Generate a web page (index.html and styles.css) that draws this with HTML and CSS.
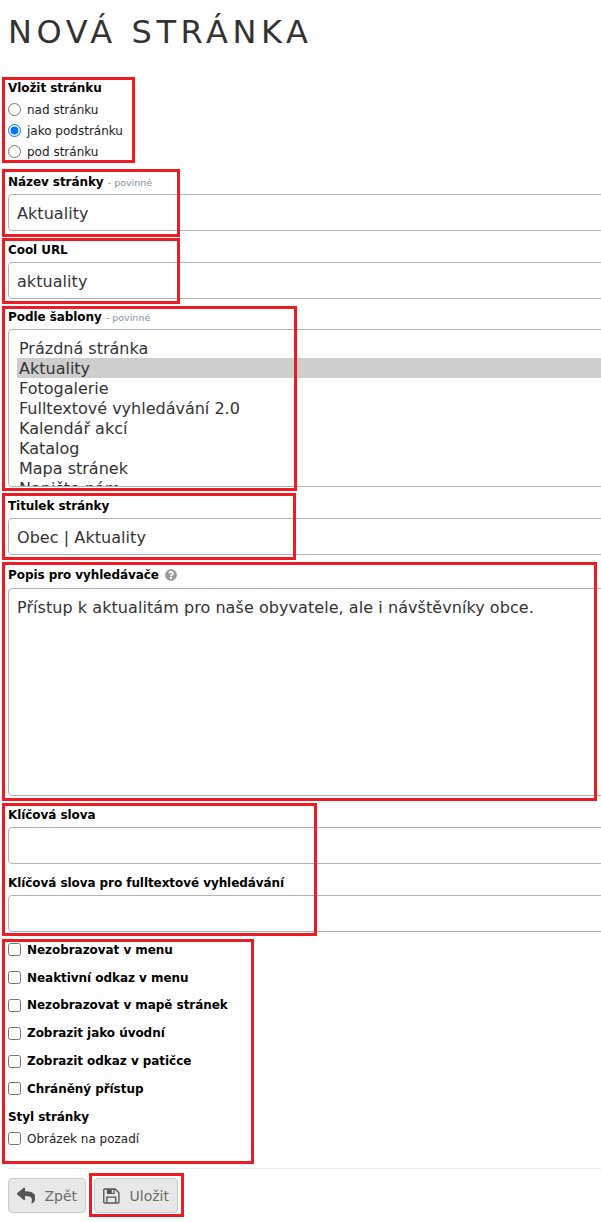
FILE: index.html
```html
<!DOCTYPE html>
<html lang="cs">
<head>
<meta charset="utf-8">
<title>Nová stránka</title>
<link rel="stylesheet" href="styles.css">
</head>
<body>
<main class="page">
  <h1 class="title">NOVÁ STRÁNKA</h1>
  <form class="form">
    <fieldset class="group group-radios">
      <div class="label">Vložit stránku</div>
      <label class="radio"><input type="radio" name="pos"><span>nad stránku</span></label>
      <label class="radio"><input type="radio" name="pos" checked><span>jako podstránku</span></label>
      <label class="radio"><input type="radio" name="pos"><span>pod stránku</span></label>
    </fieldset>
    <div class="field">
      <label class="label">Název stránky <small class="req">- povinné</small></label>
      <input class="control" type="text" value="Aktuality">
    </div>
    <div class="field">
      <label class="label">Cool URL</label>
      <input class="control" type="text" value="aktuality">
    </div>
    <div class="field field-select">
      <label class="label">Podle šablony <small class="req">- povinné</small></label>
      <select class="control listbox" size="8">
        <option>Prázdná stránka</option>
        <option selected>Aktuality</option>
        <option>Fotogalerie</option>
        <option>Fulltextové vyhledávání 2.0</option>
        <option>Kalendář akcí</option>
        <option>Katalog</option>
        <option>Mapa stránek</option>
        <option>Napište nám</option>
      </select>
    </div>
    <div class="field">
      <label class="label">Titulek stránky</label>
      <input class="control" type="text" value="Obec | Aktuality">
    </div>
    <div class="field field-help">
      <label class="label">Popis pro vyhledávače
        <svg class="help" viewBox="0 0 512 512" aria-hidden="true"><path d="M504 256c0 136.997-111.043 248-248 248S8 392.997 8 256C8 119.083 119.043 8 256 8s248 111.083 248 248zM262.655 90c-54.497 0-89.255 22.957-116.549 63.758-3.536 5.286-2.353 12.415 2.715 16.258l34.699 26.31c5.205 3.947 12.621 3.008 16.665-2.122 17.864-22.658 30.113-35.797 57.303-35.797 20.429 0 45.698 13.148 45.698 32.958 0 14.976-12.363 22.667-32.534 33.976C247.128 238.528 216 254.941 216 296v4c0 6.627 5.373 12 12 12h56c6.627 0 12-5.373 12-12v-1.333c0-28.462 83.186-29.647 83.186-106.667 0-58.002-60.165-102-116.531-102zM256 338c-25.365 0-46 20.635-46 46 0 25.364 20.635 46 46 46s46-20.636 46-46c0-25.365-20.635-46-46-46z"/></svg>
      </label>
      <textarea class="control area">Přístup k aktualitám pro naše obyvatele, ale i návštěvníky obce.</textarea>
    </div>
    <div class="field">
      <label class="label">Klíčová slova</label>
      <input class="control" type="text">
    </div>
    <div class="field">
      <label class="label">Klíčová slova pro fulltextové vyhledávání</label>
      <input class="control" type="text">
    </div>
    <div class="checks">
      <label class="check strong"><input type="checkbox"><span>Nezobrazovat v menu</span></label>
      <label class="check strong"><input type="checkbox"><span>Neaktivní odkaz v menu</span></label>
      <label class="check strong"><input type="checkbox"><span>Nezobrazovat v mapě stránek</span></label>
      <label class="check strong"><input type="checkbox"><span>Zobrazit jako úvodní</span></label>
      <label class="check strong"><input type="checkbox"><span>Zobrazit odkaz v patičce</span></label>
      <label class="check strong"><input type="checkbox"><span>Chráněný přístup</span></label>
      <div class="label style-label">Styl stránky</div>
      <label class="check plain"><input type="checkbox"><span>Obrázek na pozadí</span></label>
    </div>
    <div class="actions">
      <button class="btn btn-back" type="button">
        <svg class="icon-back" viewBox="0 0 512 512" aria-hidden="true"><path d="M8.309 189.836L184.313 37.851C199.719 24.546 224 35.347 224 56.015v80.053c160.629 1.839 288 34.032 288 186.258 0 61.441-39.581 122.309-83.333 154.132-13.653 9.931-33.111-2.533-28.077-18.631 45.344-145.012-21.507-183.51-176.59-185.742V360c0 20.7-24.3 31.453-39.687 18.164l-176.004-152c-11.071-9.562-11.086-26.753 0-36.328z"/></svg>
        Zpět
      </button>
      <button class="btn btn-save" type="button">
        <svg class="icon-save" viewBox="0 0 17 16" aria-hidden="true">
          <path class="save-line" d="M1.7.8h10.8l3.8 3.8v9.7a.9.9 0 0 1-.9.9H1.7a.9.9 0 0 1-.9-.9V1.7a.9.9 0 0 1 .9-.9z"/>
          <path class="save-fill" fill-rule="evenodd" d="M4 1h8v5H4zM9 1.8v3.2h1.7V1.8z"/>
          <path class="save-line" d="M4 15V9.2h9V15"/>
        </svg>
        Uložit
      </button>
    </div>
  </form>
</main>
<div class="mark m1"></div>
<div class="mark m2"></div>
<div class="mark m3"></div>
<div class="mark m4"></div>
<div class="mark m5"></div>
<div class="mark m6"></div>
<div class="mark m7"></div>
<div class="mark m8"></div>
<div class="mark m9"></div>
</body>
</html>
```
FILE: styles.css
```css
* { box-sizing: border-box; }
html, body { margin: 0; padding: 0; }
body {
  position: relative;
  width: 601px;
  height: 1222px;
  overflow: hidden;
  background: #fff;
  color: #000;
  font-family: "DejaVu Sans", sans-serif;
  font-size: 12px;
}
.page { padding: 0 0 0 8px; width: 640px; }
.title {
  margin: 0;
  padding-top: 13px;
  height: 79px;
  font-size: 32px;
  line-height: 38px;
  font-weight: 400;
  letter-spacing: 4.6px;
  color: #333;
}
.form { display: flex; flex-direction: column; }
.group { border: 0; margin: 0; padding: 0; height: 94px; }
.label {
  display: block;
  height: 21px;
  line-height: 18px;
  font-size: 12px;
  font-weight: 700;
  letter-spacing: -0.07px;
  color: #000;
}
.group .label { height: 20px; }
.req { font-size: 9.5px; font-weight: 400; color: #8093a8; letter-spacing: 0; }
.radio { display: flex; align-items: center; gap: 6px; height: 21px; font-size: 12px; color: #222; }
.radio input, .check input { margin: 0; width: 13px; height: 13px; flex: none; }
.field { margin-bottom: 10px; }
.field-select { margin-top: -1px; }
.field-help .label { height: 23px; padding-top: 1px; }
.control {
  display: block;
  width: 100%;
  height: 37px;
  margin: 0;
  padding: 2px 8px 0;
  border: 1px solid #b3b3b3;
  border-radius: 4px;
  background: #fff;
  color: #333;
  font-family: inherit;
  font-size: 16px;
  letter-spacing: 0.06px;
  outline: 0;
}
.listbox { height: 158px; padding: 8px 8px 0; overflow: hidden; letter-spacing: 0; }
.listbox option { height: 20px; line-height: 20px; padding: 1px 2px 0; min-height: 20px; }
.listbox option:checked { background: linear-gradient(#cecece, #cecece); color: #333; }
.area { height: 208px; padding: 9px 8px; line-height: 20px; resize: none; }
.checks { display: flex; flex-direction: column; margin-top: -6px; height: 233px; }
.check { display: flex; align-items: center; gap: 6px; font-size: 12px; height: 27.8px; flex: none; letter-spacing: -0.05px; }
.strong { font-weight: 700; }
.plain { color: #222; height: 22px; margin-top: -1px; letter-spacing: 0; }
.style-label { margin-top: 1px; height: 25px; line-height: 26px; }
.actions {
  display: flex;
  gap: 8px;
  border-top: 1px solid #eee;
  padding-top: 9px;
  margin-top: -1px;
}
.btn {
  display: inline-flex;
  align-items: center;
  height: 35px;
  padding: 0 8px;
  border: 1px solid #ccc;
  border-radius: 4px;
  background: #e8e8e8;
  color: #6a6a6a;
  font-family: inherit;
  font-size: 14px;
}
.btn-back { width: 78px; gap: 9px; }
.btn-save { width: 84px; gap: 10px; }
.icon-back { width: 19px; height: 19px; fill: #555; }
.icon-save { width: 17px; height: 16px; }
.save-line { fill: none; stroke: #555; stroke-width: 1.4; }
.save-fill { fill: #555; }
.help { width: 12px; height: 12px; fill: #999; vertical-align: -2px; margin-left: 2px; }
.mark { position: absolute; border: 3px solid #ed1c24; pointer-events: none; }
.m1 { left: 2px; top: 77px; width: 133px; height: 86px; }
.m2 { left: 2px; top: 169px; width: 178px; height: 68px; }
.m3 { left: 2px; top: 238px; width: 178px; height: 66px; }
.m4 { left: 2px; top: 306px; width: 295px; height: 185px; }
.m5 { left: 2px; top: 493px; width: 294px; height: 67px; }
.m6 { left: 2px; top: 562px; width: 595px; height: 239px; }
.m7 { left: 2px; top: 803px; width: 315px; height: 133px; }
.m8 { left: 2px; top: 939px; width: 252px; height: 225px; }
.m9 { left: 89px; top: 1173px; width: 95px; height: 44px; }
```
